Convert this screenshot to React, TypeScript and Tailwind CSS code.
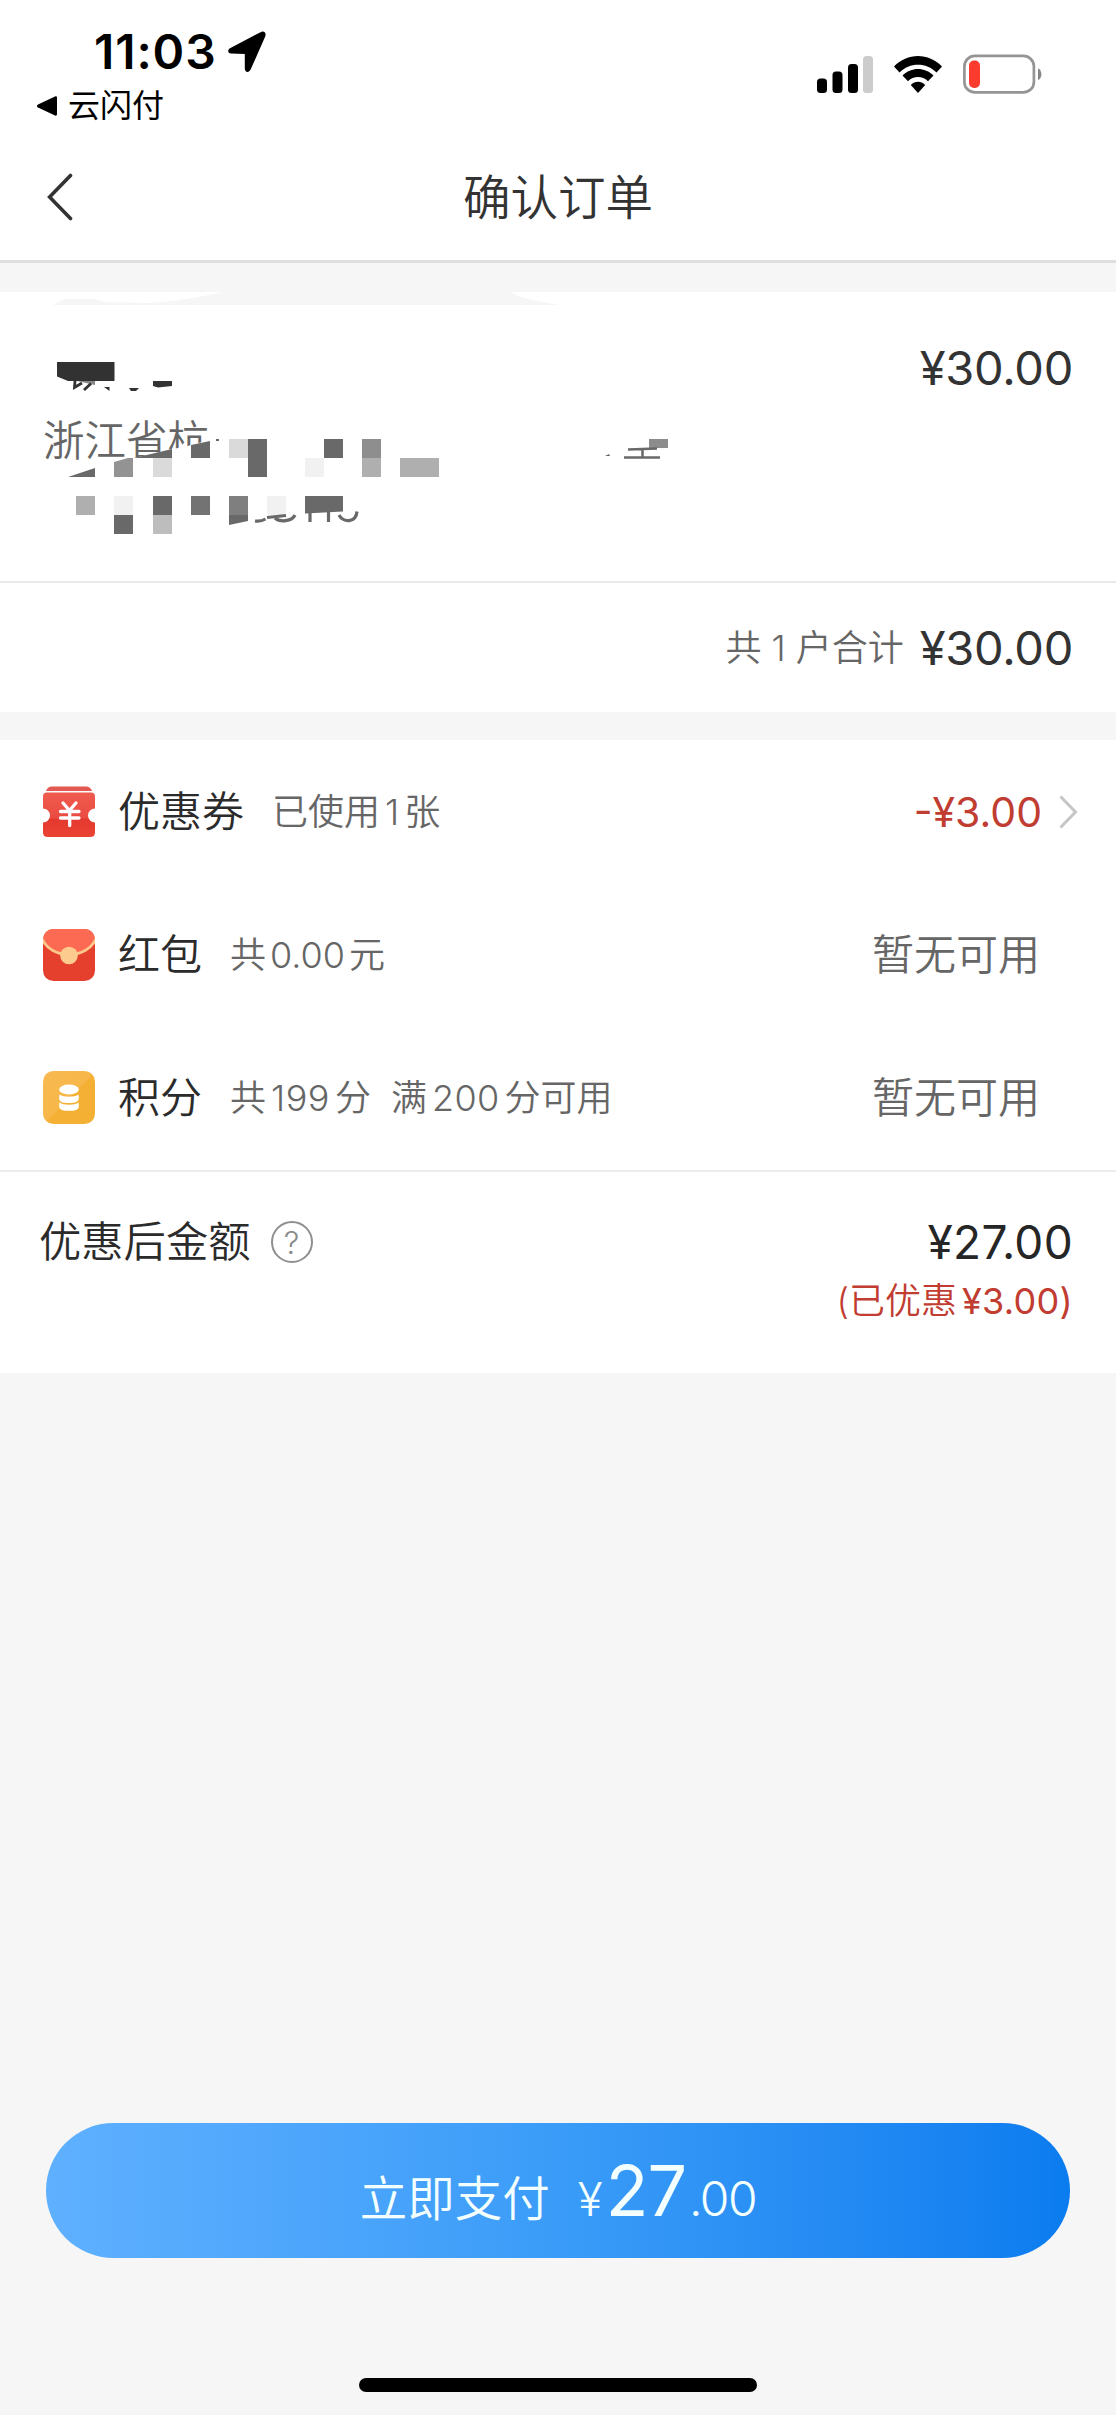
import type { ReactNode } from "react";

function StatusBar() {
  return (
    <div className="flex h-[140px] items-start justify-between pl-9 pr-[74px] text-black">
      <div className="flex flex-col">
        <div className="mt-[22px] flex h-[60px] items-center gap-[14px] pl-[58px]">
          <span className="w-[120px] whitespace-nowrap text-[48px] font-semibold leading-[60px] tracking-[0.9px]">11:03</span>
          <svg width="38" height="42" viewBox="0 0 38 42" fill="currentColor">
            <path d="M32.5 1.2 2 17.2C-.8 18.8-.2 22.4 3 22.6L16.8 23V37.5C16.8 41.6 21 42 22.6 38.6L37.2 5.6C38.6 2 36-.6 32.5 1.2Z" />
          </svg>
        </div>
        <div className="flex h-12 items-center gap-[11px]">
          <svg width="21" height="20" viewBox="0 0 21 20" fill="currentColor">
            <path d="M19 .5 2 8.4C.6 9.2.6 10.8 2 11.6L19 19.5C20.2 20 21 19.4 21 18.2V1.8C21 .6 20.2 0 19 .5Z" />
          </svg>
          <span className="text-[32px] font-normal leading-[48px]">云闪付</span>
        </div>
      </div>
      <div className="mt-[54px] flex items-center gap-[21px]">
        <svg width="56" height="39" viewBox="0 0 56 39">
          <rect x="0" y="23.5" width="10" height="14.5" rx="3.5" />
          <rect x="15.5" y="16.5" width="10" height="21.5" rx="3.5" />
          <rect x="31" y="9" width="10" height="29" rx="3.5" />
          <rect x="46" y="1" width="10" height="37" rx="3.5" fill="#cccccc" />
        </svg>
        <svg width="48" height="39" viewBox="0 0 48 39">
          <path d="M0 11.5C13-2.6 35-2.6 48 11.5L42.5 17.5C32.5 7 15.500 7 5.500 17.500Z" />
          <path d="M8.500 20.500C17 11.700 31 11.700 39.500 20.500L34 26.300C28.400 20.700 19.600 20.700 14 26.300Z" />
          <path d="M16.800 30C21 25.600 27 25.600 31.200 30L24 38Z" />
        </svg>
        <svg width="79" height="41" viewBox="0 0 79 41">
          <rect x="1.400" y="1.900" width="69.500" height="36.500" rx="10.500" fill="none" stroke="#959595" strokeWidth="2.700" />
          <rect x="6" y="6.500" width="11" height="27.500" rx="5" fill="#fc3b2f" />
          <path d="M75 14.500C79.500 16 79.500 24.500 75 26Z" fill="#858585" />
        </svg>
      </div>
    </div>
  );
}

function NavBar() {
  return (
    <div className="grid h-[123px] grid-cols-[1fr_auto_1fr] items-center border-b-[3px] border-[#dfdfdf] px-[47px] text-[#333333]">
      <svg width="26" height="48" viewBox="0 0 26 48" fill="none" stroke="currentColor" strokeWidth="3.600" strokeLinecap="round" className="-mt-[7px]">
        <path d="M23.500 2.500 2.600 24 23.500 45.500" />
      </svg>
      <h1 className="-mt-1 text-[47.500px] font-[350] leading-[60px]">确认订单</h1>
    </div>
  );
}

/* Pixelated cover over the account holder's private details */
function PrivacyMosaic() {
  return (
    <svg className="pointer-events-none absolute left-0 top-0" width="700" height="289" viewBox="0 292 700 289">
      <path d="M54 304 64 299H94L104 302 150 303C180 301 205 296 222 292H510C522 299 545 303 562 305H54Z" fill="#f6f6f6" />
      <path d="M173 449 192 445 222 436V480H173Z" fill="#ffffff" />
      <path d="M128 459.500 172 449V480H128Z" fill="#ffffff" />
      <g fill="#323232">
        <path d="M57 362H114.500V381H68L57 376.500Z" />
        <path d="M153 381H172V386L158 387.500 153 386Z" />
        <path d="M104 387H109.500V391Z" />
        <path d="M129 388H139L136 391H131Z" />
      </g>
      <path d="M77 381H95V385Z" fill="#888888" />
      <path d="M75 381 74.500 387.500 82 383M84 390 91 383.500" fill="none" stroke="#323232" strokeWidth="2.800" />
      <g fill="#696969">
        <path d="M191 445 210 441V458H191Z" />
        <path d="M134 458 172 449V458Z" />
        <path d="M68 477 95 468V477Z" />
        <path d="M248 439H267V477H248Z" />
        <path d="M324 439H343V458H324Z" />
        <path d="M153 496H172V515H153Z" />
        <path d="M305 496H343V511.500L305 513.500Z" />
        <path d="M114 515H133V534H114Z" />
        <path d="M229 515H248V521L229 525Z" />
        <path d="M216 439H219V441H216Z" />
        <path d="M605 456 609 454 610 456Z" />
      </g>
      <path d="M114 462 128 458H133V477H114Z" fill="#939393" />
      <path d="M191 496H210V515H191Z" fill="#737373" />
      <path d="M229 496H248V515H229Z" fill="#7f7f7f" />
      <path d="M362 439H381V458H362Z" fill="#8e8e8e" />
      <path d="M649 439H668V448H649Z" fill="#8c8c8c" />
      <path d="M362 458H381V477H362ZM400 458H439V477H400ZM76 496H95V515H76Z" fill="#afafaf" />
      <path d="M153 515H172V534H153Z" fill="#bdbdbd" />
      <path d="M229 439H248V458H229ZM153 458H172V477H153Z" fill="#dadada" />
      <path d="M305 458H324V477H305ZM114 496H133V515H114ZM267 496H286V515H267Z" fill="#f1f1f1" />
      <g fill="none" stroke="#696969" strokeWidth="3.200">
        <path d="M255 521C259 521.500 263 520.500 265.500 519M267 517.500 286 515.500M275 518C280 522.500 292 521.500 295 515" />
        <path d="M310 512.500V522M328.500 511.500V522" />
        <path d="M339 515C343 523 356 523 357 511.500" />
        <path d="M628 449.500 657 448.500M642.500 449V457.500M624 457.500H660" strokeWidth="2.500" />
      </g>
    </svg>
  );
}

function BillCard() {
  return (
    <section className="bg-white text-[#333333]">
      <div className="relative flex h-[289px] items-start justify-between pl-[43px] pr-[43px]">
        <p className="mt-[122px] text-[41.500px] font-[350] leading-[54px] text-[#666666]">浙江省杭</p>
        <PrivacyMosaic />
        <span className="mt-[46px] text-[47px] leading-[60px] tracking-[-0.300px]">¥30.00</span>
      </div>
      <div className="flex h-[131px] items-center justify-end gap-[16px] border-t-2 border-[#e9e9e9] pr-[43px]">
        <span className="whitespace-pre text-[36px] font-[350] leading-[50px] text-[#666666]">共 1 户合计</span>
        <span className="text-[47px] leading-[60px] tracking-[-0.300px]">¥30.00</span>
      </div>
    </section>
  );
}

function CouponIcon() {
  return (
    <svg width="52" height="52" viewBox="0 0 52 52">
      <defs>
        <linearGradient id="coupon" x1="0" y1="0" x2="0" y2="1">
          <stop offset="0" stopColor="#f05c50" />
          <stop offset=".57" stopColor="#ea4b40" />
          <stop offset=".6" stopColor="#e5392f" />
          <stop offset="1" stopColor="#ea4434" />
        </linearGradient>
      </defs>
      <path d="M3 5C4 2 6 .500 9 .500H43C46 .500 48 2 49 5Z" fill="#e35850" />
      <path d="M4 6.500H48Q52 6.500 52 10.500V22.500A7 7 0 0 0 52 36.500V46.500Q52 51 47 51H5Q0 51 0 46.500V36.500A7 7 0 0 0 0 22.500V10.500Q0 6.500 4 6.500Z" fill="url(#coupon)" />
      <path d="M20 17 26.500 24.500 33 17M17.500 25.500H36M17.500 32H36M26.700 25V39.500" fill="none" stroke="#ffffff" strokeWidth="3.300" strokeLinecap="round" />
    </svg>
  );
}

function RedPacketIcon() {
  return (
    <svg width="52" height="52" viewBox="0 0 52 52">
      <defs>
        <clipPath id="packet"><rect width="52" height="52" rx="10.500" /></clipPath>
      </defs>
      <g clipPath="url(#packet)">
        <rect width="52" height="52" fill="#e5402e" />
        <path d="M0 0H52V11C48 20 38 25.500 26 25.500S4 20 0 11Z" fill="#fd6a54" />
        <path d="M-1 10C4 20 14 25.500 26 25.500S48 20 53 10" fill="none" stroke="#fdc98a" strokeWidth="2.800" />
      </g>
      <circle cx="26" cy="26.500" r="8.800" fill="#fdcb8d" />
    </svg>
  );
}

function PointsIcon() {
  return (
    <svg width="52" height="53" viewBox="0 0 52 53">
      <defs>
        <linearGradient id="points" x1="0" y1="0" x2="1" y2="1">
          <stop offset="0" stopColor="#f8b951" />
          <stop offset=".5" stopColor="#f7b748" />
          <stop offset=".52" stopColor="#f4b034" />
          <stop offset="1" stopColor="#f3b033" />
        </linearGradient>
      </defs>
      <rect width="52" height="53" rx="10.500" fill="url(#points)" />
      <ellipse cx="26" cy="18.500" rx="9.800" ry="5" fill="#ffffff" />
      <path d="M16.500 23.500C20 26.500 32 26.500 35.500 23.500C37.500 31.500 32 32 26 32S14.500 31.500 16.500 23.500Z" fill="#ffffff" />
      <path d="M16.500 31.500C20 34.500 32 34.500 35.500 31.500C37.500 39.500 32 39.800 26 39.800S14.500 39.500 16.500 31.500Z" fill="#ffffff" />
    </svg>
  );
}

type BenefitProps = { icon: ReactNode; name: string; note: ReactNode; children: ReactNode };

function BenefitRow({ icon, name, note, children }: BenefitProps) {
  return (
    <div className="flex h-[143px] items-center pl-[43px]">
      {icon}
      <span className="ml-[23px] text-[42px] font-[350] leading-[60px] text-[#2b2b2b]">{name}</span>
      <span className="ml-[28px] flex gap-[5px] whitespace-nowrap text-[36px] font-[350] leading-[50px] text-[#666666]">{note}</span>
      <div className="ml-auto">{children}</div>
    </div>
  );
}

function Unavailable() {
  return <span className="mr-[76px] block text-[42px] font-[350] leading-[60px] text-[#666666]">暂无可用</span>;
}

function Benefits() {
  return (
    <section className="bg-white">
      <div className="h-[430px]">
        <BenefitRow icon={<CouponIcon />} name="优惠券" note={<><span>已使用</span><span>1</span><span>张</span></>}>
          <div className="flex items-center gap-[17px] pr-[38px]">
            <span className="text-[41px] leading-[60px] text-[#c13c31]">-¥3.00</span>
            <svg width="19" height="34" viewBox="0 0 19 34" fill="none" stroke="#c5c5c5" strokeWidth="3">
              <path d="M1.500 1.500 16.500 17 1.500 32.500" />
            </svg>
          </div>
        </BenefitRow>
        <BenefitRow icon={<RedPacketIcon />} name="红包" note={<><span>共</span><span className="-mx-px">0.00</span><span>元</span></>}>
          <Unavailable />
        </BenefitRow>
        <BenefitRow icon={<PointsIcon />} name="积分" note={<><span>共</span><span className="tracking-[0.500px]">199</span><span>分</span><span className="ml-[15px]">满</span><span className="tracking-[0.300px]">200</span><span>分可用</span></>}>
          <Unavailable />
        </BenefitRow>
      </div>
      <div className="flex h-[203px] items-start justify-between border-t-2 border-[#ececec] pl-[39px] pr-[43px]">
        <div className="mt-10 flex items-center gap-[20px]">
          <span className="text-[42.300px] font-[350] leading-[60px] text-[#2b2b2b]">优惠后金额</span>
          <span className="flex size-[42px] items-center justify-center rounded-full border-2 border-[#8f8f8f] text-[31px] font-light leading-none text-[#8a8a8a]">?</span>
        </div>
        <div className="mt-10 flex flex-col items-end">
          <span className="text-[46px] leading-[60px] tracking-[0.300px] text-[#262626]">¥27.00</span>
          <span className="flex gap-[5px] text-[36px] font-[350] leading-[58px] text-[#c13c31]"><span>(已优惠</span><span className="font-normal tracking-[0.300px]">¥3.00)</span></span>
        </div>
      </div>
    </section>
  );
}

export default function App() {
  return (
    <main className="flex h-[2415px] w-[1116px] flex-col overflow-hidden bg-[#f6f6f6] font-['Inter','Noto_Sans_CJK_SC',sans-serif]">
      <header className="bg-white">
        <StatusBar />
        <NavBar />
      </header>
      <div className="mt-[29px]">
        <BillCard />
      </div>
      <div className="mt-7">
        <Benefits />
      </div>
      <footer className="mt-auto flex flex-col items-center pb-[23px]">
        <button className="flex h-[135px] w-[1024px] items-baseline justify-center rounded-full bg-linear-to-r from-[#5fb0ff] via-[#3a9cf8] to-[#0a7cef] font-[350] text-[#f3ffff]">
          <span className="text-[47.500px] leading-[150px]">立即支付</span>
          <span className="ml-[28px] text-[46px]">¥</span>
          <span className="ml-[3px] text-[70px] font-normal leading-[135px] tracking-[-1px]">27</span>
          <span className="ml-[3px] text-[48px] tracking-[-1.500px]">.00</span>
        </button>
        <div className="mt-[120px] h-[14px] w-[398px] rounded-full bg-black" />
      </footer>
    </main>
  );
}
